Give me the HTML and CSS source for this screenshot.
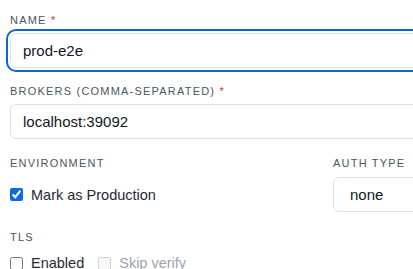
FILE: index.html
```html
<!DOCTYPE html>
<html lang="en">
<head>
    <meta charset="UTF-8">
    <meta name="viewport" content="width=device-width, initial-scale=1.0">
    <title>Edit cluster</title>
    <link rel="stylesheet" href="styles.css">
</head>
<body>
    <form class="cluster-form">
        <div class="field">
            <label class="label" for="name">Name <span class="req">*</span></label>
            <input id="name" class="input focused" type="text" value="prod-e2e">
        </div>

        <div class="field">
            <label class="label" for="brokers">Brokers (comma-separated) <span class="req">*</span></label>
            <input id="brokers" class="input" type="text" value="localhost:39092">
        </div>

        <div class="row">
            <div class="field">
                <span class="label">Environment</span>
                <label class="check">
                    <input type="checkbox" checked>
                    <span>Mark as Production</span>
                </label>
            </div>
            <div class="field">
                <label class="label" for="auth">Auth type</label>
                <select id="auth" class="input select">
                    <option>none</option>
                    <option>sasl_plain</option>
                    <option>sasl_scram</option>
                </select>
            </div>
        </div>

        <div class="field tls">
            <span class="label">TLS</span>
            <div class="checks">
                <label class="check">
                    <input type="checkbox">
                    <span>Enabled</span>
                </label>
                <label class="check disabled">
                    <input type="checkbox" disabled>
                    <span>Skip verify</span>
                </label>
            </div>
        </div>
    </form>
</body>
</html>
```

FILE: styles.css
```css
body {
    margin: 0;
    padding: 12px 0 0 10px;
    font-family: "Liberation Sans", Arial, sans-serif;
    color: #111827;
    background: #fff;
    overflow: hidden;
}
.cluster-form {
    width: 634px;
    display: flex;
    flex-direction: column;
    gap: 15px;
}
.field {
    display: flex;
    flex-direction: column;
}
.label {
    font-size: 11px;
    line-height: 16px;
    letter-spacing: 0.11em;
    text-transform: uppercase;
    color: #4b5563;
    margin-bottom: 5px;
}
.req {
    color: #dc2626;
}
.input {
    box-sizing: border-box;
    height: 35px;
    padding: 0 12px;
    border: 1px solid #dde1e6;
    border-radius: 6px;
    font-family: inherit;
    font-size: 15px;
    color: #111827;
    background: #fff;
    outline: none;
}
.input.focused {
    outline: 2px solid #0b66d0;
    outline-offset: 2px;
}
.select {
    appearance: none;
    padding-left: 16px;
}
.row {
    display: grid;
    grid-template-columns: 1fr 1fr;
    column-gap: 12px;
    margin-top: 1px;
}
.row .label {
    margin-bottom: 6px;
}
.row .check {
    height: 35px;
}
.check {
    display: flex;
    align-items: center;
    gap: 8px;
    font-size: 14.5px;
    color: #1f2937;
}
.check input {
    margin: 0;
    width: 13px;
    height: 13px;
    accent-color: #0b6bdc;
}
.check.disabled {
    color: #9ca3af;
}
.tls {
    margin-top: 2px;
}
.tls .label {
    margin-bottom: 10px;
}
.checks {
    display: flex;
    gap: 14px;
}
```
